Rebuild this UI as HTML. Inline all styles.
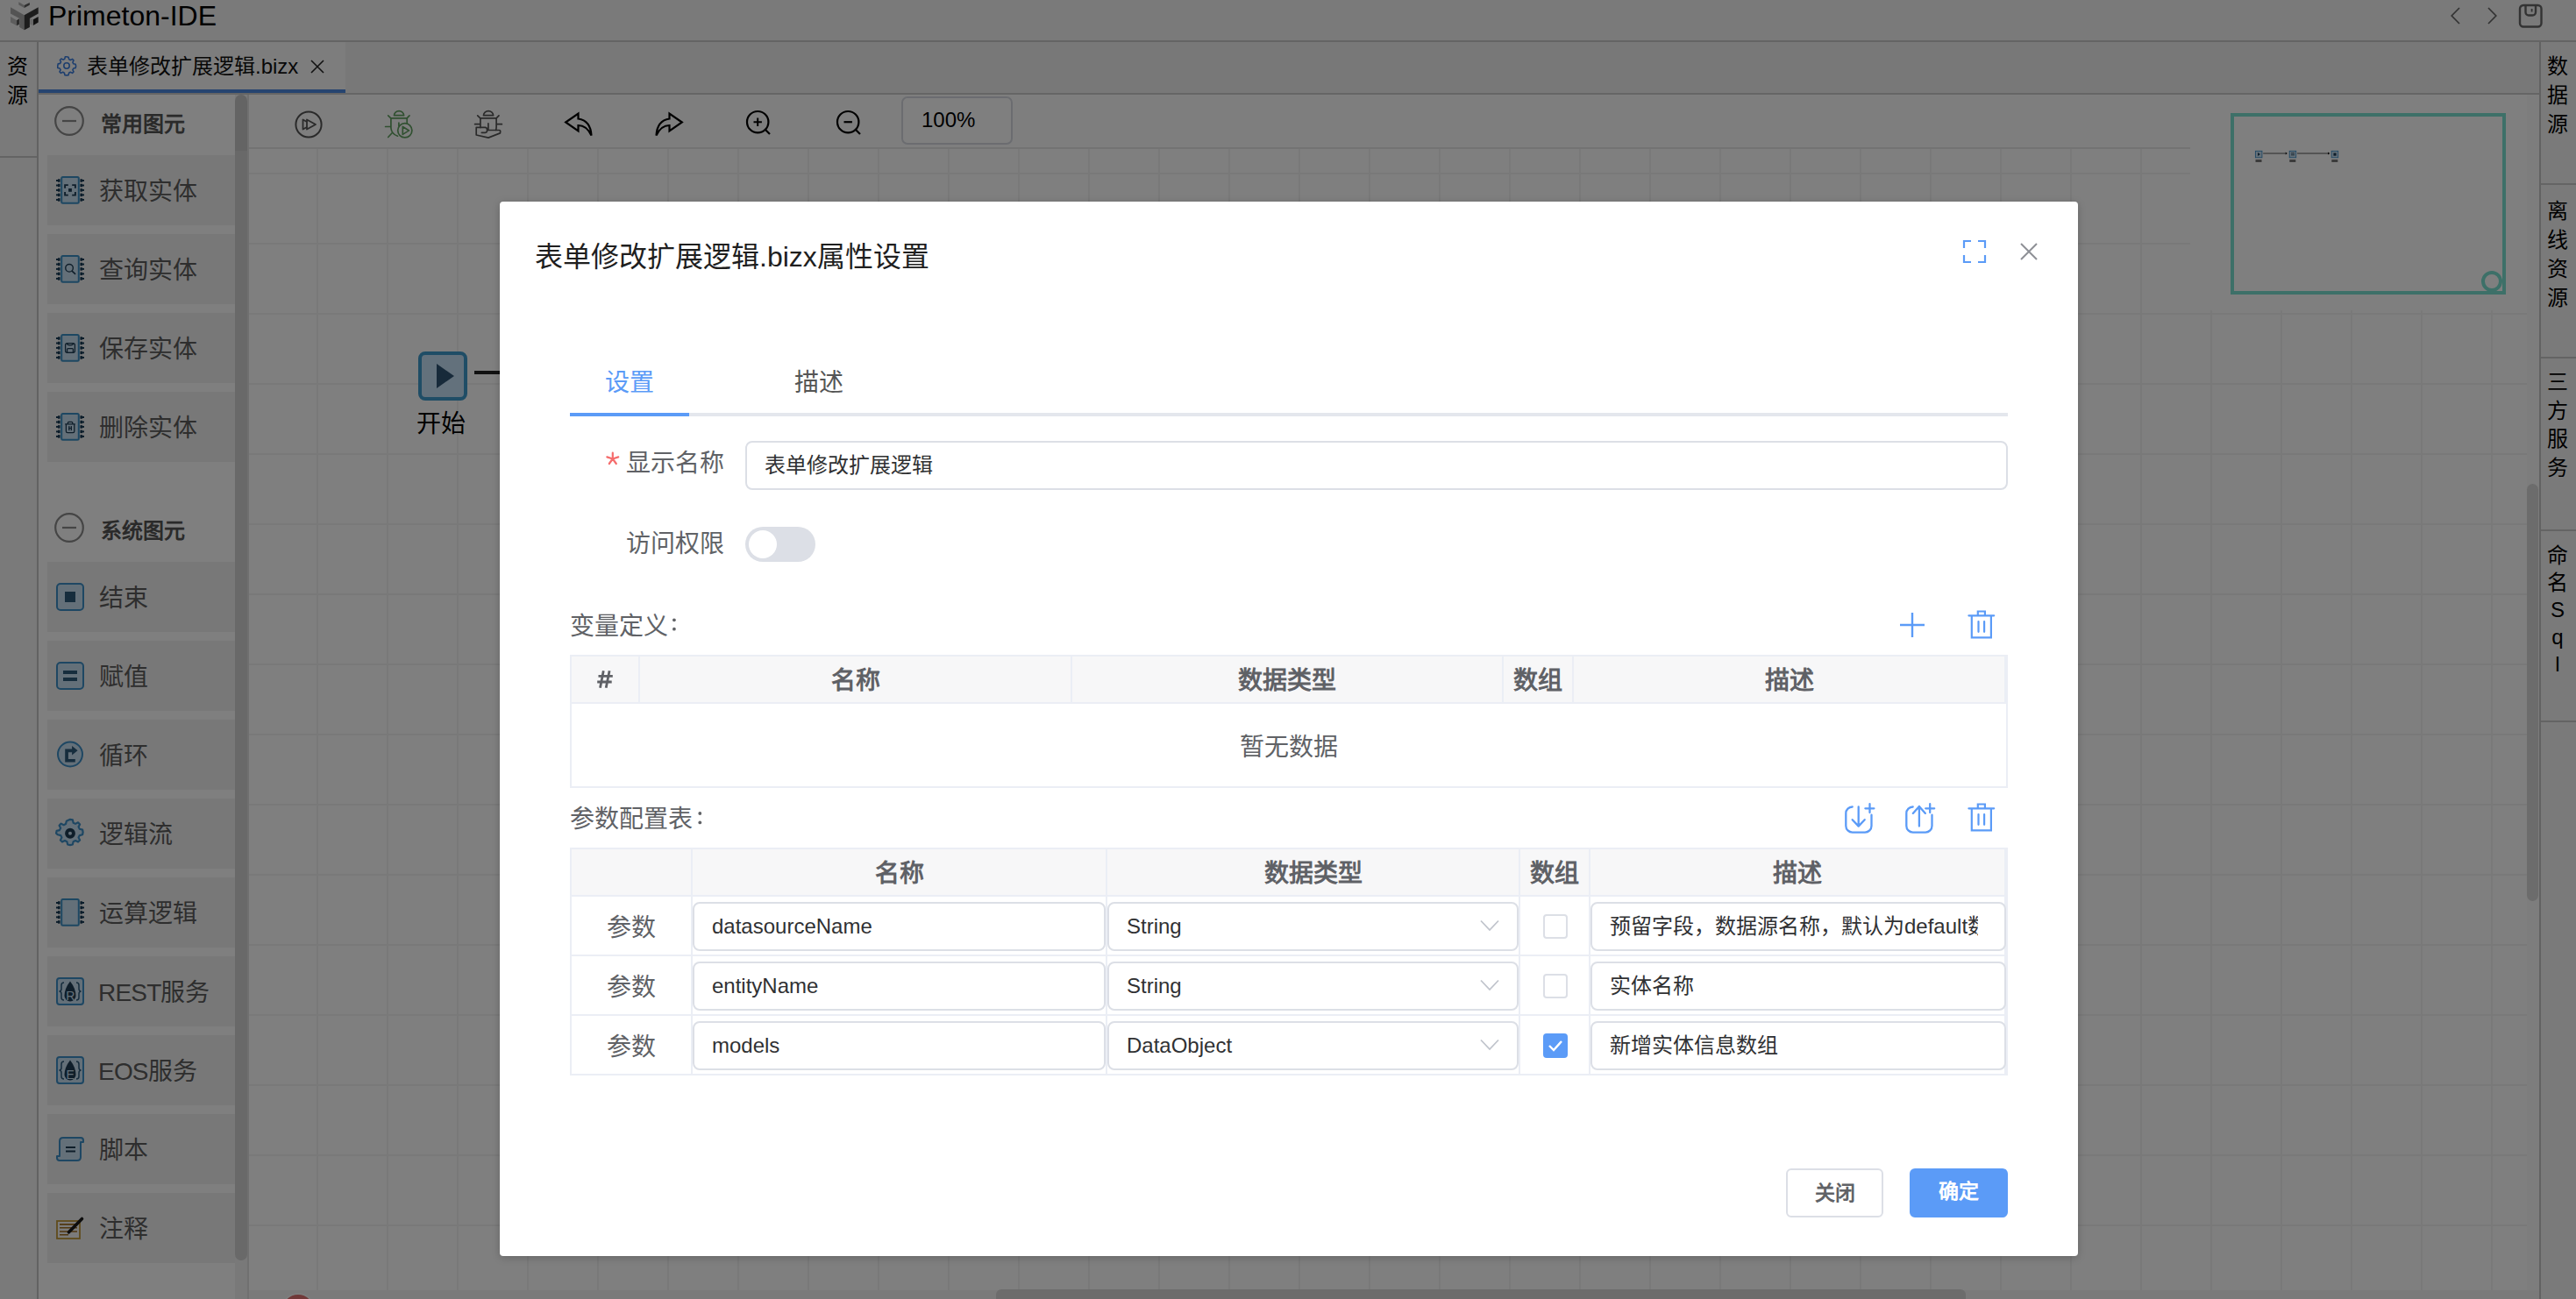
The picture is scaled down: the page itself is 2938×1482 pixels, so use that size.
<!DOCTYPE html>
<html lang="zh-CN"><head><meta charset="utf-8">
<style>
*{box-sizing:border-box;margin:0;padding:0}
html,body{width:2938px;height:1482px;overflow:hidden;font-family:"Liberation Sans",sans-serif;background:#f0f0f0;color:#000}
.a{position:absolute}
svg{position:absolute;overflow:visible}
#app{position:absolute;left:0;top:0;width:2938px;height:1482px;background:#fafafa}
#titlebar{left:0;top:0;width:2938px;height:48px;background:#f4f4f4;border-bottom:2px solid #c8c8c8}
#lstrip{left:0;top:48px;width:44px;height:1434px;background:#f4f4f4;border-right:2px solid #c4c4c4}
#lstrip .sep{position:absolute;left:0;top:130px;width:42px;height:2px;background:#c8c8c8}
.vt{position:absolute;font-size:24px;line-height:33px;color:#000;text-align:center;width:42px}
#tabbar{left:44px;top:48px;width:2852px;height:60px;background:#f0f0f0;border-bottom:2px solid #cacaca}
#tab{left:44px;top:48px;width:350px;height:58px;background:#fbfbfb;border-bottom:4px solid #4d88e0}
#palette{left:44px;top:108px;width:224px;height:1374px;background:#fefefe}
#pscroll{left:268px;top:108px;width:16px;height:1374px;background:#f2f2f2;border-right:2px solid #e0e0e0}
#pthumb{left:268px;top:108px;width:14px;height:1330px;background:linear-gradient(#c8c8c8 0,#c8c8c8 64px,#d2d2d2 64px);border-radius:7px 7px 7px 7px}
.pitem{position:absolute;left:54px;width:214px;height:80px;background:#f1f1f1}
.ptext{position:absolute;left:113px;margin-top:2px;font-size:28px;color:#5c5c5c;line-height:40px;white-space:nowrap}
.phead{position:absolute;left:115px;margin-top:4px;font-size:24px;font-weight:bold;color:#555;line-height:34px;white-space:nowrap}
#canvas{left:284px;top:170px;width:2598px;height:1302px;background-color:#fff;
 background-image:linear-gradient(to right,#f3f3f3 2px,transparent 2px),linear-gradient(to bottom,#f3f3f3 2px,transparent 2px);
 background-size:80px 80px;background-position:77px 27px}
#toolbar{left:284px;top:108px;width:2214px;height:62px;background:#fdfdfd;border-bottom:2px solid #e6e6e6}
#vscroll{left:2882px;top:552px;width:13px;height:476px;background:#d8d8d8;border-radius:7px}
#hscroll{left:1136px;top:1471px;width:1106px;height:11px;background:#d8d8d8;border-radius:6px 6px 0 0}
#hbar{left:284px;top:1472px;width:2612px;height:10px;background:#f4f4f4}
#rstrip{left:2896px;top:48px;width:42px;height:1434px;background:#f4f4f4;border-left:2px solid #c4c4c4}
.rsep{position:absolute;left:2898px;width:40px;height:2px;background:#c8c8c8}
#minimap{left:2544px;top:129px;width:314px;height:207px;border:4px solid #7ae0d0}
#mask{left:0;top:0;width:2938px;height:1482px;background:rgba(0,0,0,.5)}
#dlg{left:570px;top:230px;width:1800px;height:1203px;background:#fff;border-radius:4px;box-shadow:0 2px 10px rgba(0,0,0,.2)}
.lbl{position:absolute;font-size:28px;color:#606266;white-space:nowrap;line-height:40px}
.th{font-size:28px;font-weight:bold;color:#5f6166;text-align:center;line-height:40px;white-space:nowrap;margin-top:2px}
.inp{height:56px;border:2px solid #dcdfe6;border-radius:8px;background:#fff;white-space:nowrap;overflow:hidden}
.inp span{position:absolute;left:20px;top:9px;font-size:24px;line-height:34px;color:#303133}
.btn{border-radius:6px;text-align:center;font-size:23px;font-weight:bold;line-height:52px}
</style></head><body>
<div id="app">
  <div id="titlebar" class="a"></div>
  <!-- logo -->
  <svg style="left:0;top:0" width="50" height="40" viewBox="0 0 50 40">
    <polygon points="21.3,2.3 27.7,5.9 27.7,9.1 21.3,5.5" fill="#b0b0b0"/>
    <polygon points="27.7,5.9 33.8,2.9 33.8,5.8 27.7,9.1" fill="#5c5c5c"/>
    <polygon points="12,8.3 27.7,17.2 27.7,34.2 22.2,31.1 22.2,20.9 12,15.4" fill="#a8a8a8"/>
    <polygon points="27.7,17.2 43.7,8.2 43.7,15.4 33.9,20.9 33.9,31.1 27.7,34.2" fill="#3a3a3a"/>
    <polygon points="12,19.1 19.1,23.2 19.1,29.2 12,25.6" fill="#bcbcbc"/>
    <polygon points="19.1,23.2 21.9,21.3 21.9,27.7 19.1,29.2" fill="#505050"/>
    <polygon points="37.9,22.2 43.7,19.1 43.7,25.6 37.9,28.9" fill="#222"/>
    <polygon points="34.2,20.9 37.9,22.2 37.9,28.9 34.2,27.7" fill="#d0d0d0"/>
  </svg>
  <div class="a" style="left:55px;top:-1px;font-size:32px;line-height:38px;color:#000">Primeton-IDE</div>
  <!-- top right icons -->
  <svg style="left:2790px;top:5px" width="110" height="30" viewBox="0 0 110 30">
    <polyline points="15,4 6.2,13 15,22" fill="none" stroke="#666" stroke-width="1.7"/>
    <polyline points="48,4 56.8,13 48,22" fill="none" stroke="#666" stroke-width="1.7"/>
    <rect x="84" y="1" width="24.5" height="24.5" rx="4" fill="none" stroke="#666" stroke-width="2.4"/>
    <path d="M90.5,1 V9 a3.5,3.5 0 0 0 3.5,3.5 H98.5 a3.5,3.5 0 0 0 3.5,-3.5 V1" fill="none" stroke="#666" stroke-width="2.4"/>
    <line x1="97.6" y1="5" x2="97.6" y2="8.5" stroke="#666" stroke-width="1.8"/>
  </svg>
  <div id="lstrip" class="a"><div class="sep"></div></div>
  <div class="vt" style="left:-1px;top:59px">资<br>源</div>
  <div id="tabbar" class="a"></div>
  <div id="tab" class="a"></div>
  <svg style="left:64px;top:63px" width="24" height="24" viewBox="0 0 24 24">
    <path d="M12 1.8l2.1.4.5 2.4 1.7.9 2.2-1.1 1.5 1.5-1.1 2.2.9 1.7 2.4.5.4 2.1-.4 2.1-2.4.5-.9 1.7 1.1 2.2-1.5 1.5-2.2-1.1-1.7.9-.5 2.4-2.1.4-2.1-.4-.5-2.4-1.7-.9-2.2 1.1-1.5-1.5 1.1-2.2-.9-1.7-2.4-.5L1.8 12l.4-2.1 2.4-.5.9-1.7-1.1-2.2 1.5-1.5 2.2 1.1 1.7-.9.5-2.4z" fill="none" stroke="#3b7ddd" stroke-width="1.6" stroke-linejoin="round"/>
    <circle cx="12" cy="12" r="3.2" fill="none" stroke="#3b7ddd" stroke-width="1.6"/>
  </svg>
  <div class="a" style="left:99px;top:59px;font-size:24px;line-height:34px;color:#111;white-space:nowrap">表单修改扩展逻辑.bizx</div>
  <svg style="left:354px;top:68px" width="16" height="16" viewBox="0 0 16 16"><path d="M1 1L15 15M15 1L1 15" stroke="#222" stroke-width="1.6"/></svg>

  <div id="palette" class="a"></div>
  <div id="pscroll" class="a"></div>
  <div id="pthumb" class="a"></div>
<!--PALETTE-->
<svg style="left:62px;top:121px" width="34" height="34" viewBox="0 0 34 34"><circle cx="17" cy="17" r="15.8" fill="none" stroke="#8a8a8a" stroke-width="2.2"/><line x1="9" y1="17" x2="25" y2="17" stroke="#8a8a8a" stroke-width="2.2"/></svg><div class="phead" style="top:121px">常用图元</div>
<svg style="left:62px;top:585px" width="34" height="34" viewBox="0 0 34 34"><circle cx="17" cy="17" r="15.8" fill="none" stroke="#8a8a8a" stroke-width="2.2"/><line x1="9" y1="17" x2="25" y2="17" stroke="#8a8a8a" stroke-width="2.2"/></svg><div class="phead" style="top:585px">系统图元</div>
<div class="pitem" style="top:177px"></div><svg style="left:64px;top:201px" width="32" height="32" viewBox="0 0 32 32"><rect x="6.2" y="1" width="19.6" height="29.7" rx="1.5" fill="#c9e0f2" stroke="#3a8fc4" stroke-width="2"/><rect x="2" y="3.25" width="2.6" height="3.5" fill="#173a55"/><rect x="0" y="4" width="2.2" height="2" fill="#173a55"/><rect x="27.4" y="3.25" width="2.6" height="3.5" fill="#173a55"/><rect x="29.8" y="4" width="2.2" height="2" fill="#173a55"/><rect x="2" y="8.75" width="2.6" height="3.5" fill="#173a55"/><rect x="0" y="9.5" width="2.2" height="2" fill="#173a55"/><rect x="27.4" y="8.75" width="2.6" height="3.5" fill="#173a55"/><rect x="29.8" y="9.5" width="2.2" height="2" fill="#173a55"/><rect x="2" y="14.15" width="2.6" height="3.5" fill="#173a55"/><rect x="0" y="14.9" width="2.2" height="2" fill="#173a55"/><rect x="27.4" y="14.15" width="2.6" height="3.5" fill="#173a55"/><rect x="29.8" y="14.9" width="2.2" height="2" fill="#173a55"/><rect x="2" y="19.65" width="2.6" height="3.5" fill="#173a55"/><rect x="0" y="20.4" width="2.2" height="2" fill="#173a55"/><rect x="27.4" y="19.65" width="2.6" height="3.5" fill="#173a55"/><rect x="29.8" y="20.4" width="2.2" height="2" fill="#173a55"/><rect x="2" y="25.15" width="2.6" height="3.5" fill="#173a55"/><rect x="0" y="25.9" width="2.2" height="2" fill="#173a55"/><rect x="27.4" y="25.15" width="2.6" height="3.5" fill="#173a55"/><rect x="29.8" y="25.9" width="2.2" height="2" fill="#173a55"/><path d="M10.1,13.8 V10.1 H13.8 M18.2,10.1 H21.9 V13.8 M21.9,17.9 V21.6 H18.2 M13.8,21.6 H10.1 V17.9" fill="none" stroke="#1e3d55" stroke-width="1.9"/><rect x="14.1" y="14" width="3.8" height="3.8" fill="#1e3d55"/></svg><div class="ptext" style="top:197px">获取实体</div>
<div class="pitem" style="top:267px"></div><svg style="left:64px;top:291px" width="32" height="32" viewBox="0 0 32 32"><rect x="6.2" y="1" width="19.6" height="29.7" rx="1.5" fill="#c9e0f2" stroke="#3a8fc4" stroke-width="2"/><rect x="2" y="3.25" width="2.6" height="3.5" fill="#173a55"/><rect x="0" y="4" width="2.2" height="2" fill="#173a55"/><rect x="27.4" y="3.25" width="2.6" height="3.5" fill="#173a55"/><rect x="29.8" y="4" width="2.2" height="2" fill="#173a55"/><rect x="2" y="8.75" width="2.6" height="3.5" fill="#173a55"/><rect x="0" y="9.5" width="2.2" height="2" fill="#173a55"/><rect x="27.4" y="8.75" width="2.6" height="3.5" fill="#173a55"/><rect x="29.8" y="9.5" width="2.2" height="2" fill="#173a55"/><rect x="2" y="14.15" width="2.6" height="3.5" fill="#173a55"/><rect x="0" y="14.9" width="2.2" height="2" fill="#173a55"/><rect x="27.4" y="14.15" width="2.6" height="3.5" fill="#173a55"/><rect x="29.8" y="14.9" width="2.2" height="2" fill="#173a55"/><rect x="2" y="19.65" width="2.6" height="3.5" fill="#173a55"/><rect x="0" y="20.4" width="2.2" height="2" fill="#173a55"/><rect x="27.4" y="19.65" width="2.6" height="3.5" fill="#173a55"/><rect x="29.8" y="20.4" width="2.2" height="2" fill="#173a55"/><rect x="2" y="25.15" width="2.6" height="3.5" fill="#173a55"/><rect x="0" y="25.9" width="2.2" height="2" fill="#173a55"/><rect x="27.4" y="25.15" width="2.6" height="3.5" fill="#173a55"/><rect x="29.8" y="25.9" width="2.2" height="2" fill="#173a55"/><circle cx="15.05" cy="14.8" r="4.3" fill="none" stroke="#1e3d55" stroke-width="1.4"/><path d="M18.3,18.3 L21.6,21.4" stroke="#1e3d55" stroke-width="1.6" stroke-linecap="round"/></svg><div class="ptext" style="top:287px">查询实体</div>
<div class="pitem" style="top:357px"></div><svg style="left:64px;top:381px" width="32" height="32" viewBox="0 0 32 32"><rect x="6.2" y="1" width="19.6" height="29.7" rx="1.5" fill="#c9e0f2" stroke="#3a8fc4" stroke-width="2"/><rect x="2" y="3.25" width="2.6" height="3.5" fill="#173a55"/><rect x="0" y="4" width="2.2" height="2" fill="#173a55"/><rect x="27.4" y="3.25" width="2.6" height="3.5" fill="#173a55"/><rect x="29.8" y="4" width="2.2" height="2" fill="#173a55"/><rect x="2" y="8.75" width="2.6" height="3.5" fill="#173a55"/><rect x="0" y="9.5" width="2.2" height="2" fill="#173a55"/><rect x="27.4" y="8.75" width="2.6" height="3.5" fill="#173a55"/><rect x="29.8" y="9.5" width="2.2" height="2" fill="#173a55"/><rect x="2" y="14.15" width="2.6" height="3.5" fill="#173a55"/><rect x="0" y="14.9" width="2.2" height="2" fill="#173a55"/><rect x="27.4" y="14.15" width="2.6" height="3.5" fill="#173a55"/><rect x="29.8" y="14.9" width="2.2" height="2" fill="#173a55"/><rect x="2" y="19.65" width="2.6" height="3.5" fill="#173a55"/><rect x="0" y="20.4" width="2.2" height="2" fill="#173a55"/><rect x="27.4" y="19.65" width="2.6" height="3.5" fill="#173a55"/><rect x="29.8" y="20.4" width="2.2" height="2" fill="#173a55"/><rect x="2" y="25.15" width="2.6" height="3.5" fill="#173a55"/><rect x="0" y="25.9" width="2.2" height="2" fill="#173a55"/><rect x="27.4" y="25.15" width="2.6" height="3.5" fill="#173a55"/><rect x="29.8" y="25.9" width="2.2" height="2" fill="#173a55"/><rect x="10.6" y="10.6" width="10.8" height="10.7" rx="2" fill="none" stroke="#1e3d55" stroke-width="1.3"/><path d="M12.3,10.8 Q12.5,12.8 16,12.8 Q19.5,12.8 19.7,10.8" fill="none" stroke="#1e3d55" stroke-width="1.3"/><rect x="12.6" y="16.6" width="6.8" height="4.8" rx="1" fill="none" stroke="#1e3d55" stroke-width="1.3"/></svg><div class="ptext" style="top:377px">保存实体</div>
<div class="pitem" style="top:447px"></div><svg style="left:64px;top:471px" width="32" height="32" viewBox="0 0 32 32"><rect x="6.2" y="1" width="19.6" height="29.7" rx="1.5" fill="#c9e0f2" stroke="#3a8fc4" stroke-width="2"/><rect x="2" y="3.25" width="2.6" height="3.5" fill="#173a55"/><rect x="0" y="4" width="2.2" height="2" fill="#173a55"/><rect x="27.4" y="3.25" width="2.6" height="3.5" fill="#173a55"/><rect x="29.8" y="4" width="2.2" height="2" fill="#173a55"/><rect x="2" y="8.75" width="2.6" height="3.5" fill="#173a55"/><rect x="0" y="9.5" width="2.2" height="2" fill="#173a55"/><rect x="27.4" y="8.75" width="2.6" height="3.5" fill="#173a55"/><rect x="29.8" y="9.5" width="2.2" height="2" fill="#173a55"/><rect x="2" y="14.15" width="2.6" height="3.5" fill="#173a55"/><rect x="0" y="14.9" width="2.2" height="2" fill="#173a55"/><rect x="27.4" y="14.15" width="2.6" height="3.5" fill="#173a55"/><rect x="29.8" y="14.9" width="2.2" height="2" fill="#173a55"/><rect x="2" y="19.65" width="2.6" height="3.5" fill="#173a55"/><rect x="0" y="20.4" width="2.2" height="2" fill="#173a55"/><rect x="27.4" y="19.65" width="2.6" height="3.5" fill="#173a55"/><rect x="29.8" y="20.4" width="2.2" height="2" fill="#173a55"/><rect x="2" y="25.15" width="2.6" height="3.5" fill="#173a55"/><rect x="0" y="25.9" width="2.2" height="2" fill="#173a55"/><rect x="27.4" y="25.15" width="2.6" height="3.5" fill="#173a55"/><rect x="29.8" y="25.9" width="2.2" height="2" fill="#173a55"/><path d="M10.2,12.9 H21.8 M13.4,12.9 V11.4 Q13.4,10.4 14.4,10.4 H17.8 Q18.8,10.4 18.8,11.4 V12.9 M11.4,12.9 V21 Q11.4,22.6 13,22.6 H19.2 Q20.8,22.6 20.8,21 V12.9" fill="none" stroke="#1e3d55" stroke-width="1.3"/><rect x="14.2" y="15.1" width="1.3" height="5" fill="#1e3d55"/><rect x="16.7" y="15.1" width="1.3" height="5" fill="#1e3d55"/><rect x="14.2" y="17" width="3.8" height="1" fill="#1e3d55"/></svg><div class="ptext" style="top:467px">删除实体</div>
<div class="pitem" style="top:641px"></div><svg style="left:64px;top:665px" width="32" height="32" viewBox="0 0 32 32"><rect x="1" y="1" width="30" height="30" rx="4" fill="#c9e0f2" stroke="#3d8ec6" stroke-width="2"/><rect x="10" y="10" width="12" height="12" fill="#2d5a7b"/></svg><div class="ptext" style="top:661px">结束</div>
<div class="pitem" style="top:731px"></div><svg style="left:64px;top:755px" width="32" height="32" viewBox="0 0 32 32"><rect x="1" y="1" width="30" height="30" rx="4" fill="#c9e0f2" stroke="#3d8ec6" stroke-width="2"/><rect x="8" y="10" width="16" height="4" fill="#2d5a7b"/><rect x="8" y="18" width="16" height="4" fill="#2d5a7b"/></svg><div class="ptext" style="top:751px">赋值</div>
<div class="pitem" style="top:821px"></div><svg style="left:64px;top:845px" width="32" height="32" viewBox="0 0 32 32"><circle cx="16" cy="15.5" r="14" fill="#c9e0f2" stroke="#3d8ec6" stroke-width="2"/><path d="M10.2,9.5 H18.1 V6 L24.6,11.3 L18.1,16.5 V13.2 H13.9 V20.9 H21.8 V24.6 H10.2 Z" fill="#2d5a7b"/></svg><div class="ptext" style="top:841px">循环</div>
<div class="pitem" style="top:911px"></div><svg style="left:64px;top:935px" width="32" height="32" viewBox="0 0 32 32"><g transform="translate(16,15.75) scale(1.1) translate(-16,-16)"><path d="M16 1.5l2.6.5.7 3 2.2 1.1 2.7-1.4 1.9 1.9-1.4 2.7 1.1 2.2 3 .7.5 2.6-.5 2.6-3 .7-1.1 2.2 1.4 2.7-1.9 1.9-2.7-1.4-2.2 1.1-.7 3-2.6.5-2.6-.5-.7-3-2.2-1.1-2.7 1.4-1.9-1.9 1.4-2.7-1.1-2.2-3-.7L1.5 16l.5-2.6 3-.7 1.1-2.2-1.4-2.7 1.9-1.9 2.7 1.4 2.2-1.1.7-3z" fill="#c9e0f2" stroke="#3d8ec6" stroke-width="2" stroke-linejoin="round"/></g><circle cx="16" cy="15.75" r="3.95" fill="#c9e0f2" stroke="#1e3d55" stroke-width="3.9"/></svg><div class="ptext" style="top:931px">逻辑流</div>
<div class="pitem" style="top:1001px"></div><svg style="left:64px;top:1025px" width="32" height="32" viewBox="0 0 32 32"><rect x="6.2" y="1" width="19.6" height="29.7" rx="1.5" fill="#c9e0f2" stroke="#3a8fc4" stroke-width="2"/><rect x="2" y="3.25" width="2.6" height="3.5" fill="#173a55"/><rect x="0" y="4" width="2.2" height="2" fill="#173a55"/><rect x="27.4" y="3.25" width="2.6" height="3.5" fill="#173a55"/><rect x="29.8" y="4" width="2.2" height="2" fill="#173a55"/><rect x="2" y="8.75" width="2.6" height="3.5" fill="#173a55"/><rect x="0" y="9.5" width="2.2" height="2" fill="#173a55"/><rect x="27.4" y="8.75" width="2.6" height="3.5" fill="#173a55"/><rect x="29.8" y="9.5" width="2.2" height="2" fill="#173a55"/><rect x="2" y="14.15" width="2.6" height="3.5" fill="#173a55"/><rect x="0" y="14.9" width="2.2" height="2" fill="#173a55"/><rect x="27.4" y="14.15" width="2.6" height="3.5" fill="#173a55"/><rect x="29.8" y="14.9" width="2.2" height="2" fill="#173a55"/><rect x="2" y="19.65" width="2.6" height="3.5" fill="#173a55"/><rect x="0" y="20.4" width="2.2" height="2" fill="#173a55"/><rect x="27.4" y="19.65" width="2.6" height="3.5" fill="#173a55"/><rect x="29.8" y="20.4" width="2.2" height="2" fill="#173a55"/><rect x="2" y="25.15" width="2.6" height="3.5" fill="#173a55"/><rect x="0" y="25.9" width="2.2" height="2" fill="#173a55"/><rect x="27.4" y="25.15" width="2.6" height="3.5" fill="#173a55"/><rect x="29.8" y="25.9" width="2.2" height="2" fill="#173a55"/></svg><div class="ptext" style="top:1021px">运算逻辑</div>
<div class="pitem" style="top:1091px"></div><svg style="left:64px;top:1115px" width="32" height="32" viewBox="0 0 32 32"><rect x="1" y="1" width="30" height="30" rx="3" fill="#c9e0f2" stroke="#3d8ec6" stroke-width="2"/><path d="M9,6 q-3,0 -3,3 v4 q0,3 -2.5,3 q2.5,0 2.5,3 v4 q0,3 3,3 M23,6 q3,0 3,3 v4 q0,3 2.5,3 q-2.5,0 -2.5,3 v4 q0,3 -3,3" fill="none" stroke="#2d5a7b" stroke-width="1.5"/><path d="M16,4.5 Q22.5,13 22.5,21 A6.5,6.5 0 0 1 9.5,21 Q9.5,13 16,4.5 Z" fill="#1e3d55"/><text x="16.2" y="26" font-size="14" text-anchor="middle" fill="#c9e0f2" font-family="Liberation Sans">R</text></svg><div class="ptext" style="top:1111px"><span style="letter-spacing:-0.8px;margin-left:-1px">REST</span>服务</div>
<div class="pitem" style="top:1181px"></div><svg style="left:64px;top:1205px" width="32" height="32" viewBox="0 0 32 32"><rect x="1" y="1" width="30" height="30" rx="3" fill="#c9e0f2" stroke="#3d8ec6" stroke-width="2"/><path d="M9,6 q-3,0 -3,3 v4 q0,3 -2.5,3 q2.5,0 2.5,3 v4 q0,3 3,3 M23,6 q3,0 3,3 v4 q0,3 2.5,3 q-2.5,0 -2.5,3 v4 q0,3 -3,3" fill="none" stroke="#2d5a7b" stroke-width="1.5"/><path d="M16,4.5 Q22.5,13 22.5,21 A6.5,6.5 0 0 1 9.5,21 Q9.5,13 16,4.5 Z" fill="#1e3d55"/><text x="16.2" y="26" font-size="14" text-anchor="middle" fill="#c9e0f2" font-family="Liberation Sans">E</text></svg><div class="ptext" style="top:1201px"><span style="letter-spacing:-0.8px;margin-left:-1px">EOS</span>服务</div>
<div class="pitem" style="top:1271px"></div><svg style="left:64px;top:1295px" width="32" height="32" viewBox="0 0 32 32"><path d="M8,3 h20 q3,0 3,3 v2 h-3 v17 q0,4 -4,4 h-20 q-3,0 -3,-3 v-2 h3 v-17 q0,-4 4,-4z" fill="#c9e0f2" stroke="#3d8ec6" stroke-width="2" stroke-linejoin="round"/><path d="M11,14 h11 M11,18.5 h11" stroke="#1e3d55" stroke-width="2"/></svg><div class="ptext" style="top:1291px">脚本</div>
<div class="pitem" style="top:1361px"></div><svg style="left:64px;top:1385px" width="32" height="32" viewBox="0 0 32 32"><rect x="1" y="8" width="26" height="20" fill="#f6f6f6" stroke="#c09838" stroke-width="1.8"/><path d="M4,11.9 H24 M4,15.7 H24 M4,20 H24 M4,23.8 H14" stroke="#a06e20" stroke-width="1.6"/><path d="M14.5,20.8 L29.5,5.5" stroke="#1a1a1a" stroke-width="3.6" stroke-linecap="round"/><path d="M13.5,22 L15.5,19" stroke="#1a1a1a" stroke-width="2"/></svg><div class="ptext" style="top:1381px">注释</div>
<!--/PALETTE-->
  <div id="canvas" class="a"></div>
  <div id="hbar" class="a"></div>
  <div id="hscroll" class="a"></div>
  <div class="a" style="left:322px;top:1477px;width:36px;height:36px;border-radius:18px;background:#e07070;box-shadow:0 0 0 1.5px #fff"></div>
  <div id="vscroll" class="a"></div>
  <div id="toolbar" class="a"></div>
  <div id="rstrip" class="a"></div>
  <div class="rsep" style="top:209px"></div>
  <div class="rsep" style="top:407px"></div>
  <div class="rsep" style="top:604px"></div>
  <div class="rsep" style="top:822px"></div>
  <div class="vt" style="left:2896px;top:59px">数<br>据<br>源</div>
  <div class="vt" style="left:2896px;top:224px">离<br>线<br>资<br>源</div>
  <div class="vt" style="left:2896px;top:420px;line-height:32.5px">三<br>方<br>服<br>务</div>
  <div class="vt" style="left:2896px;top:618px;line-height:31px">命<br>名<br>S<br>q<br>l</div>
<!--TOOLBAR-->
  <svg style="left:336px;top:126px" width="32" height="32" viewBox="0 0 32 32">
    <circle cx="16" cy="16" r="14.6" fill="none" stroke="#555" stroke-width="2"/>
    <path d="M14,10.5 L24,16 L14,21.5z" fill="none" stroke="#555" stroke-width="1.8" stroke-linejoin="round"/>
    <path d="M14,13 L9.5,10.5 L9.5,21.5 L14,19" fill="none" stroke="#555" stroke-width="1.8" stroke-linejoin="round"/>
  </svg>
  <svg style="left:439px;top:126px" width="32" height="32" viewBox="0 0 32 32">
    <g fill="none" stroke="#60a060" stroke-width="1.7" stroke-linecap="round" stroke-linejoin="round">
      <path d="M10.5,5.7 A5.55,5.1 0 0 1 21.6,5.7 Z"/>
      <path d="M6.8,8.9 H25.2 V14.6 M6.9,8.9 V20 Q7.5,27 14.5,29.2 M15.9,14.2 V17.6"/>
      <path d="M3.7,5.9 L6.8,8.9 M28,5.9 L25.1,8.9 M0.6,18.5 H6.2 M3.7,30.5 L7.9,26"/>
      <circle cx="22.8" cy="22.8" r="8.1"/>
      <path d="M20.3,18.5 V27.4 L27.5,22.9 Z"/>
    </g>
  </svg>
  <svg style="left:541px;top:126px" width="32" height="32" viewBox="0 0 32 32">
    <g fill="none" stroke="#555" stroke-width="1.7" stroke-linecap="round" stroke-linejoin="round">
      <path d="M10.5,5.7 A5.55,5.1 0 0 1 21.6,5.7 Z"/>
      <path d="M6.9,8.9 H25.1 V19 Q25,21 24.6,22.4 M6.9,8.9 V19.4 M15.9,14.8 V22.3"/>
      <path d="M3.7,5.9 L6.8,8.9 M28,5.9 L25.1,8.9 M0.6,15.7 H6.2 M25.7,15.7 H31.4"/>
      <path d="M8.3,25.3 H12.5 Q14.6,25.3 14.6,22.6 Q14.6,19.4 12.3,19.4 H2.2 V28 L16,31.1 L29.4,25.9 Q30.4,22.5 28.2,22.5 H16"/>
    </g>
  </svg>
  <svg style="left:644px;top:128px" width="32" height="28" viewBox="0 0 32 28">
    <path d="M1.2,11.5 L15.5,1.5 V7.5 Q29.5,9.5 30.5,26.5 Q25,15 15.5,15 V21.5 Z" fill="none" stroke="#000" stroke-width="2.2" stroke-linejoin="miter"/>
  </svg>
  <svg style="left:747px;top:128px" width="32" height="28" viewBox="0 0 32 28">
    <path d="M30.8,11.5 L16.5,1.5 V7.5 Q2.5,9.5 1.5,26.5 Q7,15 16.5,15 V21.5 Z" fill="none" stroke="#000" stroke-width="2.2" stroke-linejoin="miter"/>
  </svg>
  <svg style="left:850px;top:125px" width="30" height="30" viewBox="0 0 30 30">
    <circle cx="14.2" cy="14.2" r="12.2" fill="none" stroke="#000" stroke-width="2.2"/>
    <path d="M23,23 L28,28" stroke="#000" stroke-width="2.2"/>
    <path d="M9.5,14.2 h9.4 M14.2,9.5 v9.4" stroke="#000" stroke-width="2"/>
  </svg>
  <svg style="left:953px;top:125px" width="30" height="30" viewBox="0 0 30 30">
    <circle cx="14.2" cy="14.2" r="12.2" fill="none" stroke="#000" stroke-width="2.2"/>
    <path d="M23,23 L28,28" stroke="#000" stroke-width="2.2"/>
    <path d="M9.5,14.2 h9.4" stroke="#000" stroke-width="2.2"/>
  </svg>
  <div class="a" style="left:1028px;top:110px;width:127px;height:55px;border:2px solid #d6d9e0;border-radius:7px;background:#fff"></div>
  <div class="a" style="left:1051px;top:120px;font-size:24px;line-height:34px;color:#000">100%</div>
  <!-- minimap panel -->
  <div class="a" style="left:2498px;top:108px;width:384px;height:246px;background:#fff"></div>
  <div id="minimap" class="a"></div>
  <svg style="left:2544px;top:129px" width="314" height="207" viewBox="0 0 314 207">
    <circle cx="298" cy="192" r="10" fill="#fff" stroke="#7ae0d0" stroke-width="4"/>
    <g>
      <path d="M37.2,46 H62.6 M76,46 H111" stroke="#555" stroke-width="1"/>
      <polygon points="62.6,44.4 64.9,46 62.6,47.6" fill="#111"/><polygon points="111,44.4 113.4,46 111,47.6" fill="#111"/>
      <rect x="28.4" y="43.3" width="7.5" height="7.5" fill="#c9e0f2" stroke="#3d8ec6" stroke-width="0.9"/>
      <rect x="67.2" y="43.3" width="7.5" height="7.5" fill="#c9e0f2" stroke="#3d8ec6" stroke-width="0.9"/>
      <rect x="115.2" y="43.3" width="7.5" height="7.5" fill="#c9e0f2" stroke="#3d8ec6" stroke-width="0.9"/>
      <polygon points="31,45 34,47 31,49" fill="#1e3d55"/>
      <path d="M69,45.8 H73 M69,47.8 H73" stroke="#1e3d55" stroke-width="0.9"/>
      <rect x="117.4" y="45.5" width="3.2" height="3.2" fill="#1e3d55"/>
      <rect x="28.5" y="53" width="7" height="3" fill="#555" opacity=".8"/><rect x="67.3" y="53" width="7" height="3" fill="#555" opacity=".8"/><rect x="115.3" y="53" width="7" height="3" fill="#555" opacity=".8"/>
    </g>
  </svg>
  <!-- start node -->
  <div class="a" style="left:477px;top:401px;width:56px;height:56px;border:4px solid #3e9acc;border-radius:8px;background:#c6e2f8"></div>
  <svg style="left:497px;top:414px" width="22" height="30" viewBox="0 0 22 30"><polygon points="1,1 21,15 1,29" fill="#2e5474"/></svg>
  <div class="a" style="left:541px;top:423px;width:40px;height:4px;background:#222"></div>
  <div class="a" style="left:475px;top:464px;font-size:28px;line-height:40px;color:#000">开始</div>
<!--/TOOLBAR-->
</div>
<div id="mask" class="a"></div>
<div id="dlg" class="a">
  <div class="a" style="left:40px;top:43px;font-size:32px;line-height:40px;color:#1f1f1f;white-space:nowrap">表单修改扩展逻辑.bizx属性设置</div>
  <svg style="left:1669px;top:44px" width="26" height="26" viewBox="0 0 26 26"><path d="M1,9 V1 H9 M17,1 H25 V9 M25,17 V25 H17 M9,25 H1 V17" fill="none" stroke="#5b9bf7" stroke-width="2.2"/></svg>
  <svg style="left:1734px;top:47px" width="20" height="20" viewBox="0 0 20 20"><path d="M1,1 L19,19 M19,1 L1,19" stroke="#8e9096" stroke-width="2"/></svg>
  <!-- tabs -->
  <div class="a" style="left:80px;top:241px;width:1640px;height:4px;background:#e4e7ed"></div>
  <div class="a" style="left:80px;top:241px;width:136px;height:4px;background:#5b9bf7"></div>
  <div class="a" style="left:120px;top:187px;font-size:28px;line-height:40px;color:#5b9bf7">设置</div>
  <div class="a" style="left:336px;top:187px;font-size:28px;line-height:40px;color:#555">描述</div>
  <!-- form -->
  <svg style="left:0;top:0" width="200" height="400" viewBox="0 0 200 400"><path d="M128.80,293.50 L128.80,286.70 M128.80,293.50 L135.27,291.40 M128.80,293.50 L132.80,299.00 M128.80,293.50 L124.80,299.00 M128.80,293.50 L122.33,291.40 " stroke="#f56c6c" stroke-width="2.2" stroke-linecap="round"/></svg>
  <div class="lbl" style="left:144px;top:279px">显示名称</div>
  <div class="a" style="left:280px;top:273px;width:1440px;height:56px;border:2px solid #dcdfe6;border-radius:8px"></div>
  <div class="a" style="left:302px;top:284px;font-size:24px;line-height:34px;color:#303133">表单修改扩展逻辑</div>
  <div class="lbl" style="left:144px;top:371px">访问权限</div>
  <div class="a" style="left:280px;top:371px;width:80px;height:40px;border-radius:20px;background:#dcdfe6"></div>
  <div class="a" style="left:284px;top:375px;width:32px;height:32px;border-radius:16px;background:#fff"></div>
  <!-- var table -->
  <div class="lbl" style="left:80px;top:465px">变量定义</div>
  <svg style="left:0;top:0" width="300" height="800" viewBox="0 0 300 800"><circle cx="198.9" cy="477.3" r="1.9" fill="#606266"/><circle cx="198.9" cy="487.7" r="1.9" fill="#606266"/><circle cx="228.3" cy="698" r="1.9" fill="#606266"/><circle cx="228.3" cy="708.4" r="1.9" fill="#606266"/></svg>
  <svg style="left:1596px;top:468px" width="30" height="30" viewBox="0 0 30 30"><path d="M15,1 V29 M1,15 H29" stroke="#5b9bf7" stroke-width="2.4"/></svg>
  <svg style="left:1674px;top:466px" width="32" height="34" viewBox="0 0 32 34"><path d="M1.4,6.3 H30.2 M11.8,6.3 V1.5 H19.9 V6.3 M4.8,6.3 V31.4 H26.9 V6.3 M12.5,13 V24.8 M19.1,13 V24.8" fill="none" stroke="#5b9bf7" stroke-width="2.2" stroke-linecap="round"/></svg>
  <div class="a" style="left:80px;top:517px;width:1640px;height:152px;border:2px solid #ebeef5"></div>
  <div class="a" style="left:82px;top:519px;width:1636px;height:52px;background:#f7f7f8"></div>
  <div class="a" style="left:82px;top:571px;width:1636px;height:2px;background:#ebeef5"></div>
  <div class="a" style="left:1716px;top:519px;width:2px;height:52px;background:#ebeef5"></div>
  <div class="a" style="left:158px;top:519px;width:2px;height:52px;background:#ebeef5"></div>
  <div class="a" style="left:651px;top:519px;width:2px;height:52px;background:#ebeef5"></div>
  <div class="a" style="left:1143px;top:519px;width:2px;height:52px;background:#ebeef5"></div>
  <div class="a" style="left:1223px;top:519px;width:2px;height:52px;background:#ebeef5"></div>
  <svg style="left:0;top:0" width="200" height="600" viewBox="0 0 200 600"><path d="M118.3,535.2 L114.5,554.7 M125.1,535.2 L121.2,554.7 M112.5,541.4 H128.8 M111.2,548 H127.7" stroke="#5f6166" stroke-width="2.8"/></svg>
  <div class="a th" style="left:160px;top:525px;width:491px">名称</div>
  <div class="a th" style="left:653px;top:525px;width:490px">数据类型</div>
  <div class="a th" style="left:1145px;top:525px;width:78px">数组</div>
  <div class="a th" style="left:1225px;top:525px;width:491px">描述</div>
  <div class="a" style="left:82px;top:603px;width:1636px;text-align:center;font-size:28px;line-height:40px;color:#606266">暂无数据</div>
  <div class="lbl" style="left:80px;top:685px">参数配置表</div>
  <svg style="left:1533px;top:686px" width="36" height="36" viewBox="0 0 36 36"><path d="M9.7,4.5 A7.4,7.4 0 0 0 2.3,11.9 V26.2 A7.4,7.4 0 0 0 9.7,33.6 H24.1 A7.4,7.4 0 0 0 31.5,26.2 V13.7 M16.7,4.5 V26.6 M9.7,19.2 L16.7,26.6 L23.7,19.2 M29.5,1.2 V11.1 M24.4,6.3 H34.4" fill="none" stroke="#5b9bf7" stroke-width="2.3" stroke-linecap="round" stroke-linejoin="round"/></svg>
  <svg style="left:1602px;top:686px" width="36" height="36" viewBox="0 0 36 36"><path d="M9.7,4.5 A7.4,7.4 0 0 0 2.3,11.9 V26.2 A7.4,7.4 0 0 0 9.7,33.6 H24.1 A7.4,7.4 0 0 0 31.5,26.2 V13.7 M16.9,4 V26.6 M9.8,11.9 L16.9,4.1 L23.9,11.9 M29.2,1.2 V11.1 M24.2,6.3 H34.2" fill="none" stroke="#5b9bf7" stroke-width="2.3" stroke-linecap="round" stroke-linejoin="round"/></svg>
  <svg style="left:1674px;top:686px" width="32" height="34" viewBox="0 0 32 34"><path d="M1.4,6.3 H30.2 M11.8,6.3 V1.5 H19.9 V6.3 M4.8,6.3 V31.4 H26.9 V6.3 M12.5,13 V24.8 M19.1,13 V24.8" fill="none" stroke="#5b9bf7" stroke-width="2.2" stroke-linecap="round"/></svg>
  <div class="a" style="left:80px;top:737px;width:1640px;height:260px;border:2px solid #ebeef5"></div>
  <div class="a" style="left:82px;top:739px;width:1636px;height:52px;background:#f7f7f8"></div>
  <div class="a" style="left:1716px;top:739px;width:2px;height:256px;background:#ebeef5"></div>
  <div class="a" style="left:82px;top:791px;width:1636px;height:2px;background:#ebeef5"></div>
  <div class="a" style="left:82px;top:859px;width:1636px;height:2px;background:#ebeef5"></div>
  <div class="a" style="left:82px;top:927px;width:1636px;height:2px;background:#ebeef5"></div>
  <div class="a" style="left:218px;top:739px;width:2px;height:256px;background:#ebeef5"></div>
  <div class="a" style="left:691px;top:739px;width:2px;height:256px;background:#ebeef5"></div>
  <div class="a" style="left:1162px;top:739px;width:2px;height:256px;background:#ebeef5"></div>
  <div class="a" style="left:1242px;top:739px;width:2px;height:256px;background:#ebeef5"></div>
  <div class="a th" style="left:220px;top:745px;width:471px">名称</div>
  <div class="a th" style="left:693px;top:745px;width:469px">数据类型</div>
  <div class="a th" style="left:1164px;top:745px;width:78px">数组</div>
  <div class="a th" style="left:1244px;top:745px;width:472px">描述</div>
  <div class="a" style="left:82px;top:809px;width:136px;text-align:center;font-size:28px;line-height:40px;color:#606266">参数</div>
  <div class="a inp" style="left:220px;top:799px;width:471px"><span>datasourceName</span></div>
  <div class="a inp" style="left:693px;top:799px;width:469px"><span>String</span></div>
  <svg style="left:1118px;top:819px" width="22" height="14" viewBox="0 0 22 14"><path d="M1,1.5 L11,12 L21,1.5" fill="none" stroke="#c0c4cc" stroke-width="1.8"/></svg>
  <div class="a" style="left:1190px;top:813px;width:28px;height:28px;border-radius:4px;border:2px solid #dcdfe6;background:#fff"></div>
  <div class="a inp" style="left:1244px;top:799px;width:474px;overflow:hidden"><span style="font-size:24px;width:420px;overflow:hidden">预留字段，数据源名称，默认为default数据源</span></div>
  <div class="a" style="left:82px;top:877px;width:136px;text-align:center;font-size:28px;line-height:40px;color:#606266">参数</div>
  <div class="a inp" style="left:220px;top:867px;width:471px"><span>entityName</span></div>
  <div class="a inp" style="left:693px;top:867px;width:469px"><span>String</span></div>
  <svg style="left:1118px;top:887px" width="22" height="14" viewBox="0 0 22 14"><path d="M1,1.5 L11,12 L21,1.5" fill="none" stroke="#c0c4cc" stroke-width="1.8"/></svg>
  <div class="a" style="left:1190px;top:881px;width:28px;height:28px;border-radius:4px;border:2px solid #dcdfe6;background:#fff"></div>
  <div class="a inp" style="left:1244px;top:867px;width:474px;overflow:hidden"><span style="font-size:24px">实体名称</span></div>
  <div class="a" style="left:82px;top:945px;width:136px;text-align:center;font-size:28px;line-height:40px;color:#606266">参数</div>
  <div class="a inp" style="left:220px;top:935px;width:471px"><span>models</span></div>
  <div class="a inp" style="left:693px;top:935px;width:469px"><span>DataObject</span></div>
  <svg style="left:1118px;top:955px" width="22" height="14" viewBox="0 0 22 14"><path d="M1,1.5 L11,12 L21,1.5" fill="none" stroke="#c0c4cc" stroke-width="1.8"/></svg>
  <div class="a" style="left:1190px;top:949px;width:28px;height:28px;border-radius:4px;background:#5b9bf7"></div>
  <svg style="left:1190px;top:949px" width="28" height="28" viewBox="0 0 28 28"><path d="M7,14 L12,19 L21,9" fill="none" stroke="#fff" stroke-width="2.4"/></svg>
  <div class="a inp" style="left:1244px;top:935px;width:474px;overflow:hidden"><span style="font-size:24px">新增实体信息数组</span></div>
  <div class="a btn" style="left:1467px;top:1103px;width:111px;height:56px;border:2px solid #dcdfe6;color:#606266">关闭</div>
  <div class="a btn" style="left:1608px;top:1103px;width:112px;height:56px;background:#5b9bf7;color:#fff">确定</div>
</div>

</body></html>
